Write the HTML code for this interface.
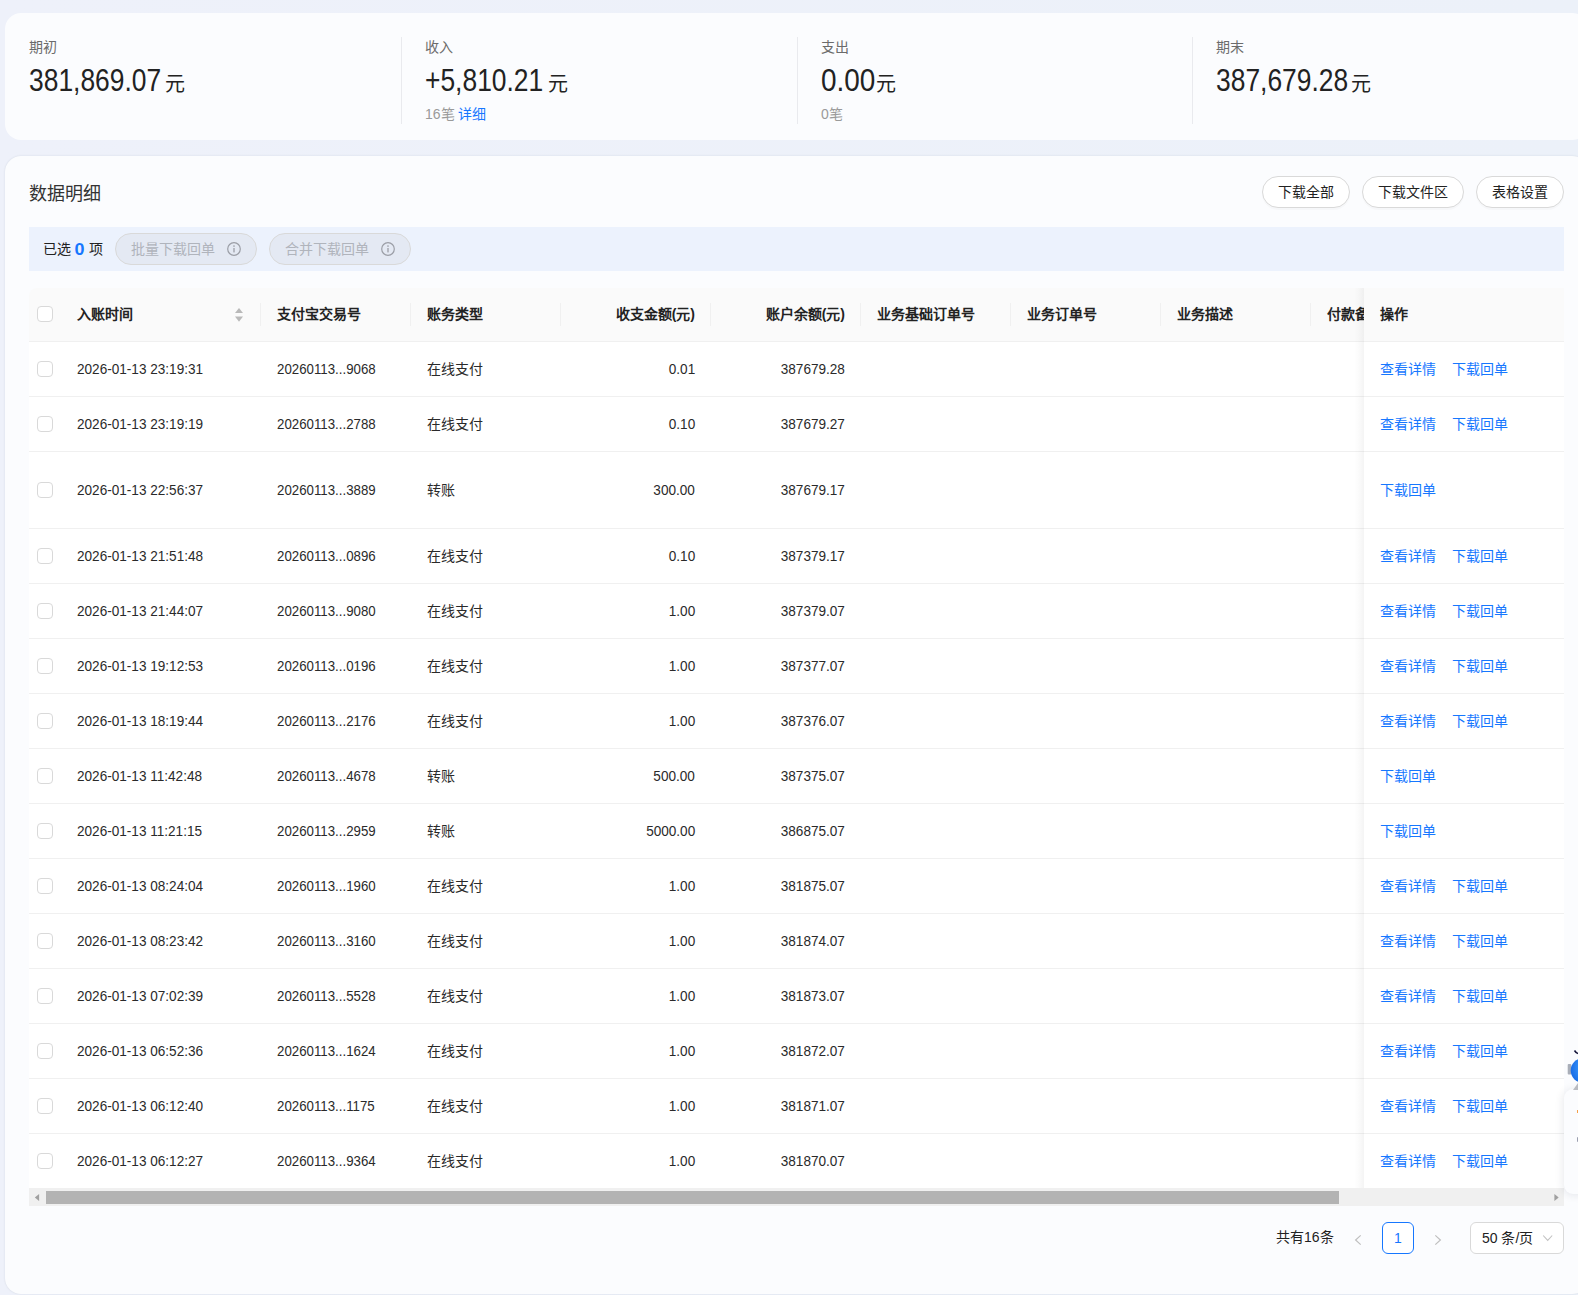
<!DOCTYPE html>
<html lang="zh-CN">
<head>
<meta charset="utf-8">
<title>数据明细</title>
<style>
html,body{margin:0;padding:0}
body{width:1578px;height:1295px;overflow:hidden;background:linear-gradient(90deg,#eef1fa,#ecf1f9);font-family:"Liberation Sans",sans-serif;font-size:14px;color:#2a2a2a;position:relative;line-height:22px}
*{box-sizing:border-box}
.card{position:absolute;left:5px;width:1583px;background:#fbfcfe;border-radius:16px}
#c1{top:13px;height:127px}
#c2{top:156px;height:1138px;box-shadow:0 0 2px rgba(70,85,100,.16)}
.abs{position:absolute;white-space:nowrap}
.lab{font-size:14px;color:#6b6b6b;line-height:14px}
.big{font-size:31px;line-height:30px;color:#222;transform-origin:0 50%;transform:scaleX(.852)}
.yuan{font-size:20px;line-height:20px;color:#222}
.sub{font-size:14px;line-height:14px;color:#9a9a9a}
.sub a{color:#1677ff}
.vline{position:absolute;top:37px;width:1px;height:87px;background:#e9eaee}
.title{left:29px;top:183px;font-size:18px;line-height:22px;color:#333}
.btn{position:absolute;top:176px;height:32px;border:1px solid #d9d9d9;border-radius:16px;background:#fff;text-align:center;line-height:30px;font-size:14px;color:#222;box-shadow:0 2px 0 rgba(0,0,0,.02)}
.bar{position:absolute;left:29px;top:227px;width:1535px;height:44px;background:#ecf2fd}
.bar .sel{position:absolute;left:0;top:11px;width:90px;height:22px;line-height:22px;color:#222;white-space:nowrap}
.bar .sel span,.bar .sel b{position:absolute;top:0}
.bar .sel b{color:#1677ff;font-weight:700;font-size:16px;display:inline-block;transform:scaleX(1.12);left:46px;top:1px;width:9px;text-align:center}
.dbtn{position:absolute;top:6px;height:32px;width:142px;border:1px solid #d9d9d9;border-radius:16px;background:#e4e9f3;color:#b0b4bc;line-height:30px;padding-left:15px;white-space:nowrap}
.dbtn svg{position:absolute;left:111px;top:8px}
.table{position:absolute;left:29px;top:288px;width:1535px}
.tr{display:flex;height:55px;border-bottom:1px solid #f0f0f0;background:#fff;align-items:center}
.tr.tall{height:77px}
.th{height:54px;padding-bottom:1px;background:#fafafa;font-weight:700;color:#222;border-radius:8px 0 0 0;position:relative}
.td{flex:none;padding:0 16px;white-space:nowrap;overflow:hidden;height:100%;display:flex;align-items:center;position:relative}
.td.r{justify-content:flex-end}
.c0{width:32px;padding:0 8px}
.c1{width:200px}
.c2,.c3,.c4,.c5,.c6,.c7,.c8{width:150px}
.c9{width:53px;padding-right:0}
.c10{width:200px;overflow:visible}
.fshadow{position:absolute;left:1325px;top:0;width:10px;height:900px;background:linear-gradient(to right,rgba(5,5,5,0),rgba(5,5,5,.012) 40%,rgba(5,5,5,.045));pointer-events:none}
.th .td::after{content:"";position:absolute;right:0;top:15px;width:1px;height:23px;background:#f0f0f0}
.th .c0::after,.th .c9::after,.th .c10::after{display:none}
.num{font-size:15px}
.n{display:inline-block;transform:scaleX(.905);transform-origin:0 50%}
.r .n{transform-origin:100% 50%}
.c2 .n{transform:scaleX(.885)}
.cb{display:block;width:16px;height:16px;border:1px solid #d9d9d9;border-radius:4px;background:#fff}
.lk{color:#1677ff;display:inline-block;width:56px;margin-right:16px;white-space:nowrap}
.sorter{position:absolute;left:174px;top:19.5px}
.sbar{position:absolute;left:29px;top:1188px;width:1535px;height:18px;background:#f0f0f0}
.thumb{position:absolute;left:17px;top:3px;width:1293px;height:13px;background:#b3b3b3}
.pg{position:absolute;top:1222px;height:32px;line-height:30px}

</style>
</head>
<body>
<div class="card" id="c1"></div>
<div class="abs lab" style="left:29px;top:40px">期初</div>
<div class="abs big" style="left:29px;top:66px">381,869.07</div>
<div class="abs yuan" style="left:165px;top:74px">元</div>
<div class="vline" style="left:401px"></div>
<div class="abs lab" style="left:425px;top:40px">收入</div>
<div class="abs big" style="left:425px;top:66px">+5,810.21</div>
<div class="abs yuan" style="left:548px;top:74px">元</div>
<div class="abs sub" style="left:425px;top:107px">16笔</div>
<div class="abs sub" style="left:458px;top:107px"><a>详细</a></div>
<div class="vline" style="left:797px"></div>
<div class="abs lab" style="left:821px;top:40px">支出</div>
<div class="abs big" style="left:821px;top:66px;transform:scaleX(.9)">0.00</div>
<div class="abs yuan" style="left:876px;top:74px">元</div>
<div class="abs sub" style="left:821px;top:107px">0笔</div>
<div class="vline" style="left:1192px"></div>
<div class="abs lab" style="left:1216px;top:40px">期末</div>
<div class="abs big" style="left:1216px;top:66px">387,679.28</div>
<div class="abs yuan" style="left:1351px;top:74px">元</div>

<div class="card" id="c2"></div>
<div class="abs title">数据明细</div>
<div class="btn" style="left:1262px;width:88px">下载全部</div>
<div class="btn" style="left:1362px;width:102px">下载文件区</div>
<div class="btn" style="left:1476px;width:88px">表格设置</div>
<div class="bar">
  <div class="sel"><span style="left:14px">已选</span><b>0</b><span style="left:60px">项</span></div>
  <div class="dbtn" style="left:86px">批量下载回单<svg width="14" height="14" viewBox="0 0 14 14"><circle cx="7" cy="7" r="6.3" fill="none" stroke="#9b9ea6" stroke-width="1.2"/><rect x="6.35" y="6" width="1.3" height="4.4" fill="#9b9ea6"/><circle cx="7" cy="4" r=".85" fill="#9b9ea6"/></svg></div>
  <div class="dbtn" style="left:240px">合并下载回单<svg width="14" height="14" viewBox="0 0 14 14"><circle cx="7" cy="7" r="6.3" fill="none" stroke="#9b9ea6" stroke-width="1.2"/><rect x="6.35" y="6" width="1.3" height="4.4" fill="#9b9ea6"/><circle cx="7" cy="4" r=".85" fill="#9b9ea6"/></svg></div>
</div>
<div class="table">
<div class="tr th"><div class="td c0"><span class="cb"></span></div><div class="td c1">入账时间<svg class="sorter" width="8" height="14" viewBox="0 0 8 14"><path d="M4 0 L8 5.1 H0 Z" fill="#b9b9b9"/><path d="M4 13.7 L8 8.5 H0 Z" fill="#b9b9b9"/></svg></div><div class="td c2">支付宝交易号</div><div class="td c3">账务类型</div><div class="td c4 r">收支金额(元)</div><div class="td c5 r">账户余额(元)</div><div class="td c6">业务基础订单号</div><div class="td c7">业务订单号</div><div class="td c8">业务描述</div><div class="td c9">付款备注</div><div class="td c10">操作</div></div>
<div class="tr"><div class="td c0"><span class="cb"></span></div><div class="td c1 num"><span class="n">2026-01-13 23:19:31</span></div><div class="td c2 num"><span class="n">20260113...9068</span></div><div class="td c3">在线支付</div><div class="td c4 num r"><span class="n">0.01</span></div><div class="td c5 num r"><span class="n">387679.28</span></div><div class="td c6"></div><div class="td c7"></div><div class="td c8"></div><div class="td c9"></div><div class="td c10"><a class="lk">查看详情</a><a class="lk">下载回单</a></div></div>
<div class="tr"><div class="td c0"><span class="cb"></span></div><div class="td c1 num"><span class="n">2026-01-13 23:19:19</span></div><div class="td c2 num"><span class="n">20260113...2788</span></div><div class="td c3">在线支付</div><div class="td c4 num r"><span class="n">0.10</span></div><div class="td c5 num r"><span class="n">387679.27</span></div><div class="td c6"></div><div class="td c7"></div><div class="td c8"></div><div class="td c9"></div><div class="td c10"><a class="lk">查看详情</a><a class="lk">下载回单</a></div></div>
<div class="tr tall"><div class="td c0"><span class="cb"></span></div><div class="td c1 num"><span class="n">2026-01-13 22:56:37</span></div><div class="td c2 num"><span class="n">20260113...3889</span></div><div class="td c3">转账</div><div class="td c4 num r"><span class="n">300.00</span></div><div class="td c5 num r"><span class="n">387679.17</span></div><div class="td c6"></div><div class="td c7"></div><div class="td c8"></div><div class="td c9"></div><div class="td c10"><a class="lk">下载回单</a></div></div>
<div class="tr"><div class="td c0"><span class="cb"></span></div><div class="td c1 num"><span class="n">2026-01-13 21:51:48</span></div><div class="td c2 num"><span class="n">20260113...0896</span></div><div class="td c3">在线支付</div><div class="td c4 num r"><span class="n">0.10</span></div><div class="td c5 num r"><span class="n">387379.17</span></div><div class="td c6"></div><div class="td c7"></div><div class="td c8"></div><div class="td c9"></div><div class="td c10"><a class="lk">查看详情</a><a class="lk">下载回单</a></div></div>
<div class="tr"><div class="td c0"><span class="cb"></span></div><div class="td c1 num"><span class="n">2026-01-13 21:44:07</span></div><div class="td c2 num"><span class="n">20260113...9080</span></div><div class="td c3">在线支付</div><div class="td c4 num r"><span class="n">1.00</span></div><div class="td c5 num r"><span class="n">387379.07</span></div><div class="td c6"></div><div class="td c7"></div><div class="td c8"></div><div class="td c9"></div><div class="td c10"><a class="lk">查看详情</a><a class="lk">下载回单</a></div></div>
<div class="tr"><div class="td c0"><span class="cb"></span></div><div class="td c1 num"><span class="n">2026-01-13 19:12:53</span></div><div class="td c2 num"><span class="n">20260113...0196</span></div><div class="td c3">在线支付</div><div class="td c4 num r"><span class="n">1.00</span></div><div class="td c5 num r"><span class="n">387377.07</span></div><div class="td c6"></div><div class="td c7"></div><div class="td c8"></div><div class="td c9"></div><div class="td c10"><a class="lk">查看详情</a><a class="lk">下载回单</a></div></div>
<div class="tr"><div class="td c0"><span class="cb"></span></div><div class="td c1 num"><span class="n">2026-01-13 18:19:44</span></div><div class="td c2 num"><span class="n">20260113...2176</span></div><div class="td c3">在线支付</div><div class="td c4 num r"><span class="n">1.00</span></div><div class="td c5 num r"><span class="n">387376.07</span></div><div class="td c6"></div><div class="td c7"></div><div class="td c8"></div><div class="td c9"></div><div class="td c10"><a class="lk">查看详情</a><a class="lk">下载回单</a></div></div>
<div class="tr"><div class="td c0"><span class="cb"></span></div><div class="td c1 num"><span class="n">2026-01-13 11:42:48</span></div><div class="td c2 num"><span class="n">20260113...4678</span></div><div class="td c3">转账</div><div class="td c4 num r"><span class="n">500.00</span></div><div class="td c5 num r"><span class="n">387375.07</span></div><div class="td c6"></div><div class="td c7"></div><div class="td c8"></div><div class="td c9"></div><div class="td c10"><a class="lk">下载回单</a></div></div>
<div class="tr"><div class="td c0"><span class="cb"></span></div><div class="td c1 num"><span class="n">2026-01-13 11:21:15</span></div><div class="td c2 num"><span class="n">20260113...2959</span></div><div class="td c3">转账</div><div class="td c4 num r"><span class="n">5000.00</span></div><div class="td c5 num r"><span class="n">386875.07</span></div><div class="td c6"></div><div class="td c7"></div><div class="td c8"></div><div class="td c9"></div><div class="td c10"><a class="lk">下载回单</a></div></div>
<div class="tr"><div class="td c0"><span class="cb"></span></div><div class="td c1 num"><span class="n">2026-01-13 08:24:04</span></div><div class="td c2 num"><span class="n">20260113...1960</span></div><div class="td c3">在线支付</div><div class="td c4 num r"><span class="n">1.00</span></div><div class="td c5 num r"><span class="n">381875.07</span></div><div class="td c6"></div><div class="td c7"></div><div class="td c8"></div><div class="td c9"></div><div class="td c10"><a class="lk">查看详情</a><a class="lk">下载回单</a></div></div>
<div class="tr"><div class="td c0"><span class="cb"></span></div><div class="td c1 num"><span class="n">2026-01-13 08:23:42</span></div><div class="td c2 num"><span class="n">20260113...3160</span></div><div class="td c3">在线支付</div><div class="td c4 num r"><span class="n">1.00</span></div><div class="td c5 num r"><span class="n">381874.07</span></div><div class="td c6"></div><div class="td c7"></div><div class="td c8"></div><div class="td c9"></div><div class="td c10"><a class="lk">查看详情</a><a class="lk">下载回单</a></div></div>
<div class="tr"><div class="td c0"><span class="cb"></span></div><div class="td c1 num"><span class="n">2026-01-13 07:02:39</span></div><div class="td c2 num"><span class="n">20260113...5528</span></div><div class="td c3">在线支付</div><div class="td c4 num r"><span class="n">1.00</span></div><div class="td c5 num r"><span class="n">381873.07</span></div><div class="td c6"></div><div class="td c7"></div><div class="td c8"></div><div class="td c9"></div><div class="td c10"><a class="lk">查看详情</a><a class="lk">下载回单</a></div></div>
<div class="tr"><div class="td c0"><span class="cb"></span></div><div class="td c1 num"><span class="n">2026-01-13 06:52:36</span></div><div class="td c2 num"><span class="n">20260113...1624</span></div><div class="td c3">在线支付</div><div class="td c4 num r"><span class="n">1.00</span></div><div class="td c5 num r"><span class="n">381872.07</span></div><div class="td c6"></div><div class="td c7"></div><div class="td c8"></div><div class="td c9"></div><div class="td c10"><a class="lk">查看详情</a><a class="lk">下载回单</a></div></div>
<div class="tr"><div class="td c0"><span class="cb"></span></div><div class="td c1 num"><span class="n">2026-01-13 06:12:40</span></div><div class="td c2 num"><span class="n">20260113...1175</span></div><div class="td c3">在线支付</div><div class="td c4 num r"><span class="n">1.00</span></div><div class="td c5 num r"><span class="n">381871.07</span></div><div class="td c6"></div><div class="td c7"></div><div class="td c8"></div><div class="td c9"></div><div class="td c10"><a class="lk">查看详情</a><a class="lk">下载回单</a></div></div>
<div class="tr"><div class="td c0"><span class="cb"></span></div><div class="td c1 num"><span class="n">2026-01-13 06:12:27</span></div><div class="td c2 num"><span class="n">20260113...9364</span></div><div class="td c3">在线支付</div><div class="td c4 num r"><span class="n">1.00</span></div><div class="td c5 num r"><span class="n">381870.07</span></div><div class="td c6"></div><div class="td c7"></div><div class="td c8"></div><div class="td c9"></div><div class="td c10"><a class="lk">查看详情</a><a class="lk">下载回单</a></div></div>
<div class="fshadow"></div>
</div>
<div class="sbar"><svg style="position:absolute;left:5px;top:5px" width="6" height="9" viewBox="0 0 6 9"><path d="M5.1 0.9 L0.8 4.5 L5.1 8.1 Z" fill="#a0a0a0"/></svg><div class="thumb"></div><svg style="position:absolute;left:1524px;top:5px" width="6" height="9" viewBox="0 0 6 9"><path d="M1.4 0.9 L5.7 4.5 L1.4 8.1 Z" fill="#a0a0a0"/></svg></div>
<div class="abs" style="left:1564px;top:1089px;width:30px;height:105px;background:#fbfcfe;border-radius:9px 0 0 9px;box-shadow:-1px 1px 9px rgba(30,40,70,.10)"></div>
<svg class="abs" style="left:1560px;top:1044px" width="18" height="48" viewBox="0 0 18 48">
<defs><radialGradient id="rb" cx="0.75" cy="0.4" r="0.8"><stop offset="0" stop-color="#7fc0ff"/><stop offset="0.55" stop-color="#2f8cf7"/><stop offset="1" stop-color="#1668e3"/></radialGradient></defs>
<path d="M14.5 6.5 Q16 9 18 9.5" stroke="#15153a" stroke-width="1.6" fill="none"/>
<path d="M13 46 L18 39 L18 46 Z" fill="#b9bcc2"/>
<rect x="7.7" y="20" width="3.6" height="10.5" rx="1" fill="#a9aeb8"/>
<circle cx="23" cy="26.5" r="12.3" fill="url(#rb)"/>
<rect x="16.8" y="66" width="2" height="3" fill="#f39a3c"/>
</svg>
<div class="abs" style="left:1577px;top:1110px;width:1px;height:3px;background:#f5a04a"></div>
<div class="abs" style="left:1577px;top:1137px;width:1px;height:5px;background:#9b9fb0;border-radius:1px 0 0 1px"></div>
<div class="pg abs" style="left:1276px;color:#222">共有16条</div>
<svg class="abs" style="left:1353px;top:1233px" width="10" height="14" viewBox="0 0 10 14"><path d="M7.7 2.4 L2.6 7 L7.7 11.6" fill="none" stroke="#bfbfbf" stroke-width="1.2"/></svg>
<div class="pg" style="left:1382px;width:32px;border:1px solid #1677ff;border-radius:6px;background:#fff;color:#1677ff;text-align:center;font-weight:400">1</div>
<svg class="abs" style="left:1433px;top:1233px" width="10" height="14" viewBox="0 0 10 14"><path d="M2.3 2.4 L7.4 7 L2.3 11.6" fill="none" stroke="#bfbfbf" stroke-width="1.2"/></svg>
<div class="pg" style="left:1470px;width:94px;border:1px solid #d9d9d9;border-radius:6px;background:#fff;color:#222;padding-left:11px;white-space:nowrap">50 条/页<svg style="position:absolute;left:71px;top:11px" width="12" height="9" viewBox="0 0 12 9"><path d="M1.2 1.5 L5.7 6.4 L10.2 1.5" fill="none" stroke="#c2c2c2" stroke-width="1.1"/></svg></div>
</body>
</html>
